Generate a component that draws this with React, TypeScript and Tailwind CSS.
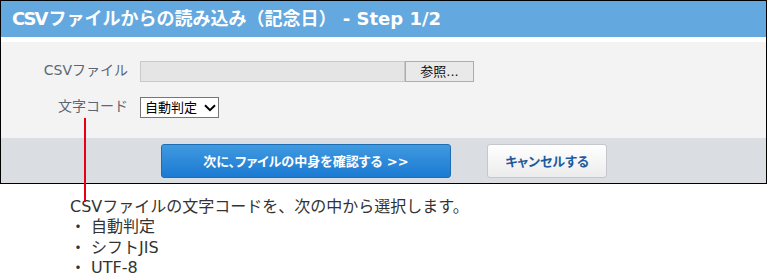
import React from "react";

const F = "font-['DejaVu_Sans','Noto_Sans_CJK_JP',sans-serif]";

export default function App() {
  return (
    <div className={`relative w-[768px] h-[279px] bg-white ${F}`}>
      <div className="w-[767px] border border-black">
        <div className="h-[36px] bg-[#63a8de] flex items-center pl-[11px] text-white font-bold text-[18px] leading-none">
          <span className="tracking-[-2px] mr-[2px]">CSV</span>
          <span>ファイルからの読み込み（記念日） - Step 1/2</span>
        </div>
        <div className="h-[5px] bg-white" />
        <div className="h-[96px] bg-[#f3f3f3] pt-[19px] flex flex-col gap-[15px]">
          <div className="flex items-center h-[21px]">
            <div className="w-[127px] text-right text-[14px] text-[#5b6773] leading-none pb-[3px]">CSVファイル</div>
            <div className="ml-[12px] flex h-[21px]">
              <div className="w-[265px] h-[21px] bg-[#e5e5e5] border border-[#c9c9c9]" />
              <div className="w-[69px] h-[21px] bg-[#e9e9e9] border border-[#adadad] flex items-center justify-center text-[13px] text-[#111] leading-none">
                参照...
              </div>
            </div>
          </div>
          <div className="flex items-center h-[21px]">
            <div className="w-[127px] text-right text-[14px] text-[#5b6773] leading-none pb-[3px]">文字コード</div>
            <div className="ml-[12px] w-[79px] h-[21px] bg-white border border-[#767676] flex items-center pl-[4px] gap-[7px] text-[13px] text-black leading-none">
              <span>自動判定</span>
              <svg width="12" height="8" viewBox="0 0 12 8">
                <path d="M1 1.2 L6 6.2 L11 1.2" fill="none" stroke="#000" strokeWidth="2" />
              </svg>
            </div>
          </div>
        </div>
        <div className="h-[45px] bg-[#dadee3] pt-[6px] pl-[160px] flex gap-[36px] [font-feature-settings:'palt']">
          <div className="w-[290px] h-[34px] rounded-[3px] border border-[#1e6db3] bg-gradient-to-b from-[#3f9ae0] to-[#1a7ad2] flex items-center justify-center text-white font-bold text-[13px] leading-none">
            次に、ファイルの中身を確認する &gt;&gt;
          </div>
          <div className="w-[120px] h-[34px] rounded-[3px] border border-[#c4c7cb] bg-gradient-to-b from-white to-[#ececec] flex items-center justify-center text-[#1c5b9f] font-bold text-[13px] leading-none">
            キャンセルする
          </div>
        </div>
      </div>

      <div className="absolute left-[84px] top-[118px] w-[2px] h-[84px] bg-[#e60012]" />

      <div className="mt-[13px] pl-[70px] text-[16px] leading-[20.4px] text-[#333]">
        <div>CSVファイルの文字コードを、次の中から選択します。</div>
        <div className="flex"><span className="w-[21px]">・</span><span>自動判定</span></div>
        <div className="flex"><span className="w-[21px]">・</span><span>シフトJIS</span></div>
        <div className="flex"><span className="w-[21px]">・</span><span>UTF-8</span></div>
      </div>
    </div>
  );
}
